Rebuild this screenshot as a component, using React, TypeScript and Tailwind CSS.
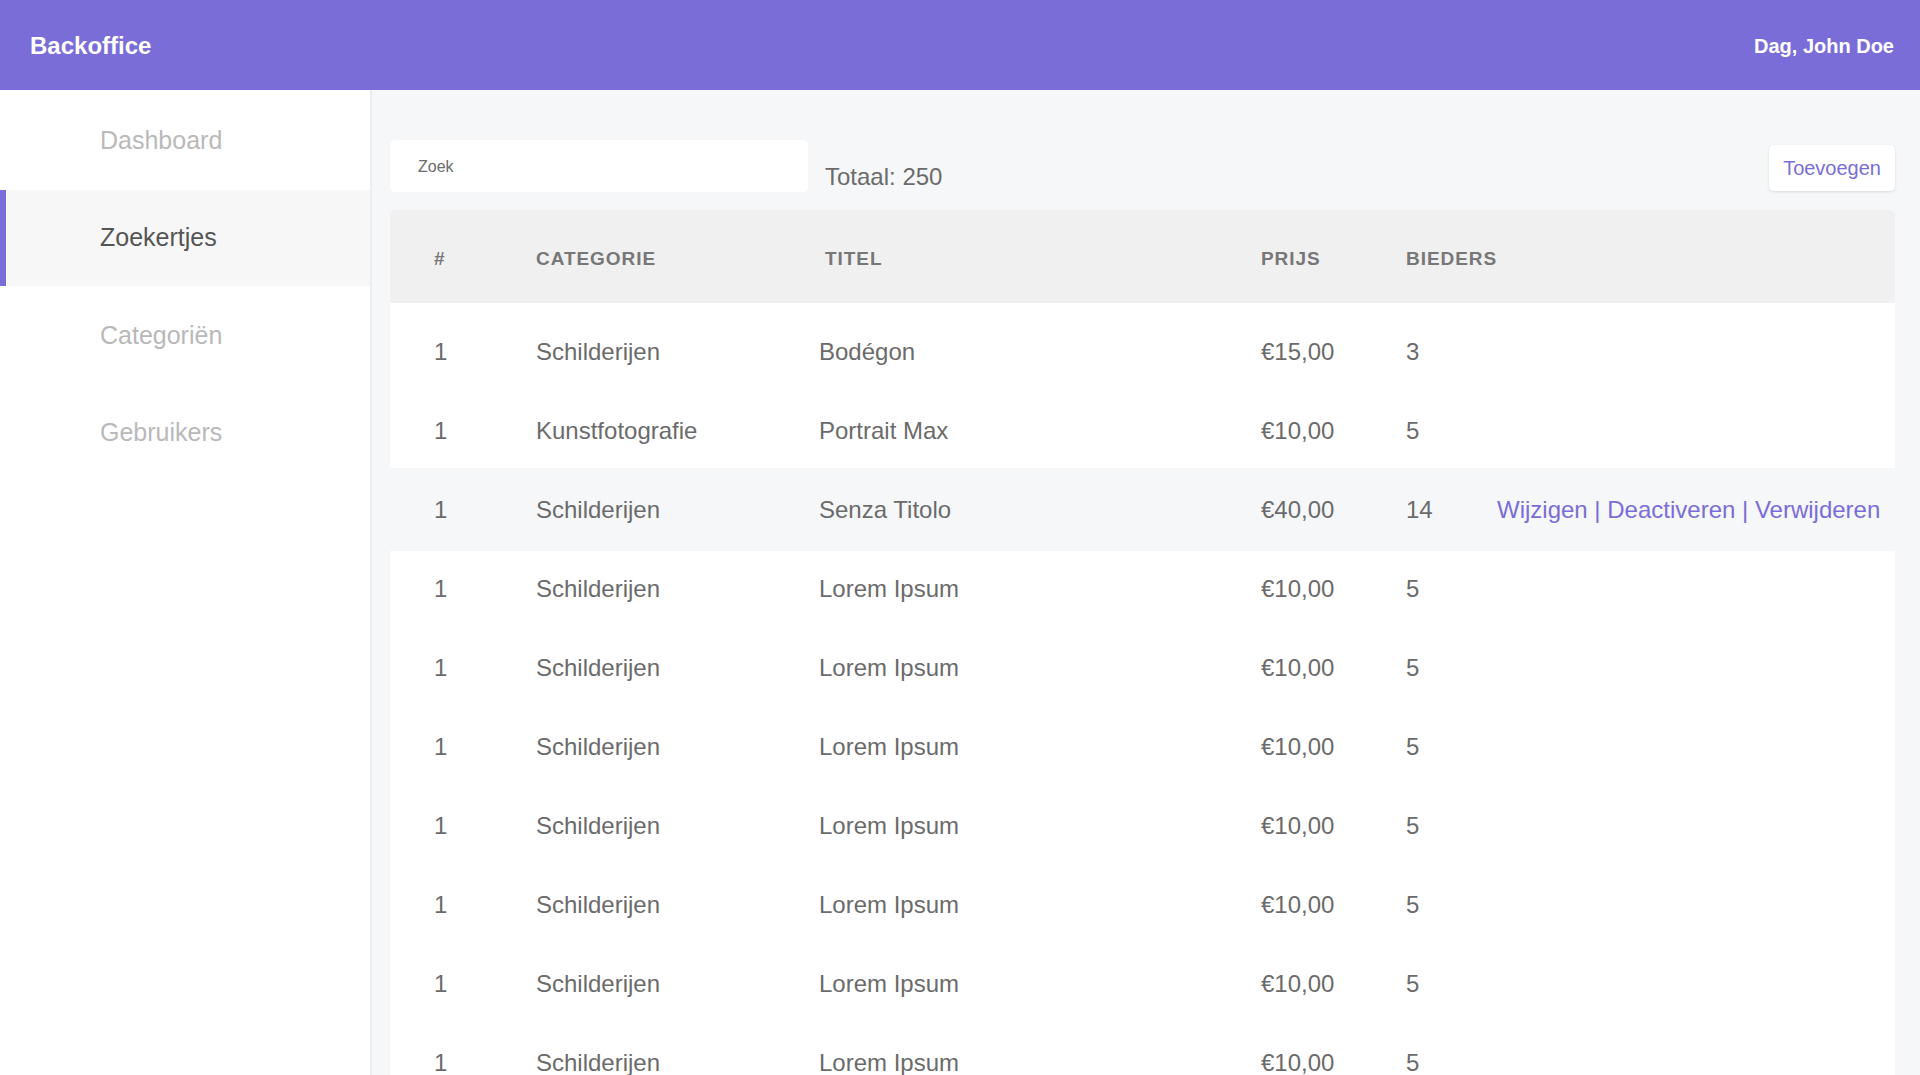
import React from "react"

const navItems = [
  { label: "Dashboard", active: false },
  { label: "Zoekertjes", active: true },
  { label: "Categoriën", active: false },
  { label: "Gebruikers", active: false },
]

type Row = {
  id: number
  categorie: string
  titel: string
  prijs: string
  bieders: number
  selected?: boolean
}

const rows: Row[] = [
  { id: 1, categorie: "Schilderijen", titel: "Bodégon", prijs: "€15,00", bieders: 3 },
  { id: 1, categorie: "Kunstfotografie", titel: "Portrait Max", prijs: "€10,00", bieders: 5 },
  { id: 1, categorie: "Schilderijen", titel: "Senza Titolo", prijs: "€40,00", bieders: 14, selected: true },
  ...Array.from({ length: 7 }, () => ({
    id: 1,
    categorie: "Schilderijen",
    titel: "Lorem Ipsum",
    prijs: "€10,00",
    bieders: 5,
  })),
]

const cols = "grid grid-cols-[102px_283px_442px_145px_91px_1fr] pl-[44px] pr-[20px] items-center"

export default function App() {
  return (
    <div className="h-screen overflow-hidden flex flex-col font-['Liberation_Sans',Arial,sans-serif] bg-[#f6f7f9]">
      {/* Top bar */}
      <header className="h-[90px] shrink-0 bg-[#7b6dd8] flex items-center justify-between pl-[30px] pr-[26px] pt-[2px] text-white">
        <h1 className="text-[24px] font-bold">Backoffice</h1>
        <span className="text-[20px] font-bold">Dag, John Doe</span>
      </header>

      <div className="flex flex-1 min-h-0">
        {/* Sidebar */}
        <aside className="w-[372px] shrink-0 bg-white border-r-2 border-[#ededef]">
          <nav className="flex flex-col pt-[2px]">
            {navItems.map((item) => (
              <a
                key={item.label}
                href="#"
                className={
                  item.active
                    ? "h-[96px] my-[1px] flex items-center pl-[94px] text-[25px] text-[#555555] bg-[#f7f7f7] border-l-[6px] border-[#7b6dd8]"
                    : "h-[97px] flex items-center pl-[100px] text-[25px] text-[#b9b9b9]"
                }
              >
                {item.label}
              </a>
            ))}
          </nav>
        </aside>

        {/* Main */}
        <main className="flex-1 min-h-0 overflow-hidden pl-[18px] pr-[25px] pt-[50px]">
          <div className="flex items-end">
            <div className="w-[418px] h-[52px] bg-white rounded-[5px] flex items-center pl-[28px] pt-[2px] text-[16px] text-[#6b6b6b]">
              Zoek
            </div>
            <span className="ml-[17px] text-[24px] leading-none text-[#6b6b6b] pb-[3px]">Totaal: 250</span>
            <button className="ml-auto mb-[1px] h-[46px] px-[14px] bg-white rounded-[5px] shadow-[0_1px_3px_rgba(0,0,0,0.12)] text-[20px] text-[#7b6dd8]">
              Toevoegen
            </button>
          </div>

          <div className="mt-[18px] bg-white rounded-t-[5px]">
            <div className={`${cols} h-[93px] pt-[5px] bg-[#f0f0f0] rounded-t-[5px] text-[19px] font-bold tracking-[0.05em] text-[#777777]`}>
              <span>#</span>
              <span>CATEGORIE</span>
              <span className="pl-[6px]">TITEL</span>
              <span>PRIJS</span>
              <span>BIEDERS</span>
              <span />
            </div>
            <div className="pt-[9px]">
              {rows.map((r, i) => (
                <div
                  key={i}
                  className={`${cols} text-[24px] text-[#6b6b6b] ${
                    r.selected ? "h-[83px] -my-[2px] bg-[#f6f7f9]" : "h-[79px]"
                  }`}
                >
                  <span>{r.id}</span>
                  <span>{r.categorie}</span>
                  <span>{r.titel}</span>
                  <span>{r.prijs}</span>
                  <span>{r.bieders}</span>
                  <span className="text-[#7b6dd8] whitespace-nowrap">
                    {r.selected ? "Wijzigen | Deactiveren | Verwijderen" : ""}
                  </span>
                </div>
              ))}
            </div>
          </div>
        </main>
      </div>
    </div>
  )
}
